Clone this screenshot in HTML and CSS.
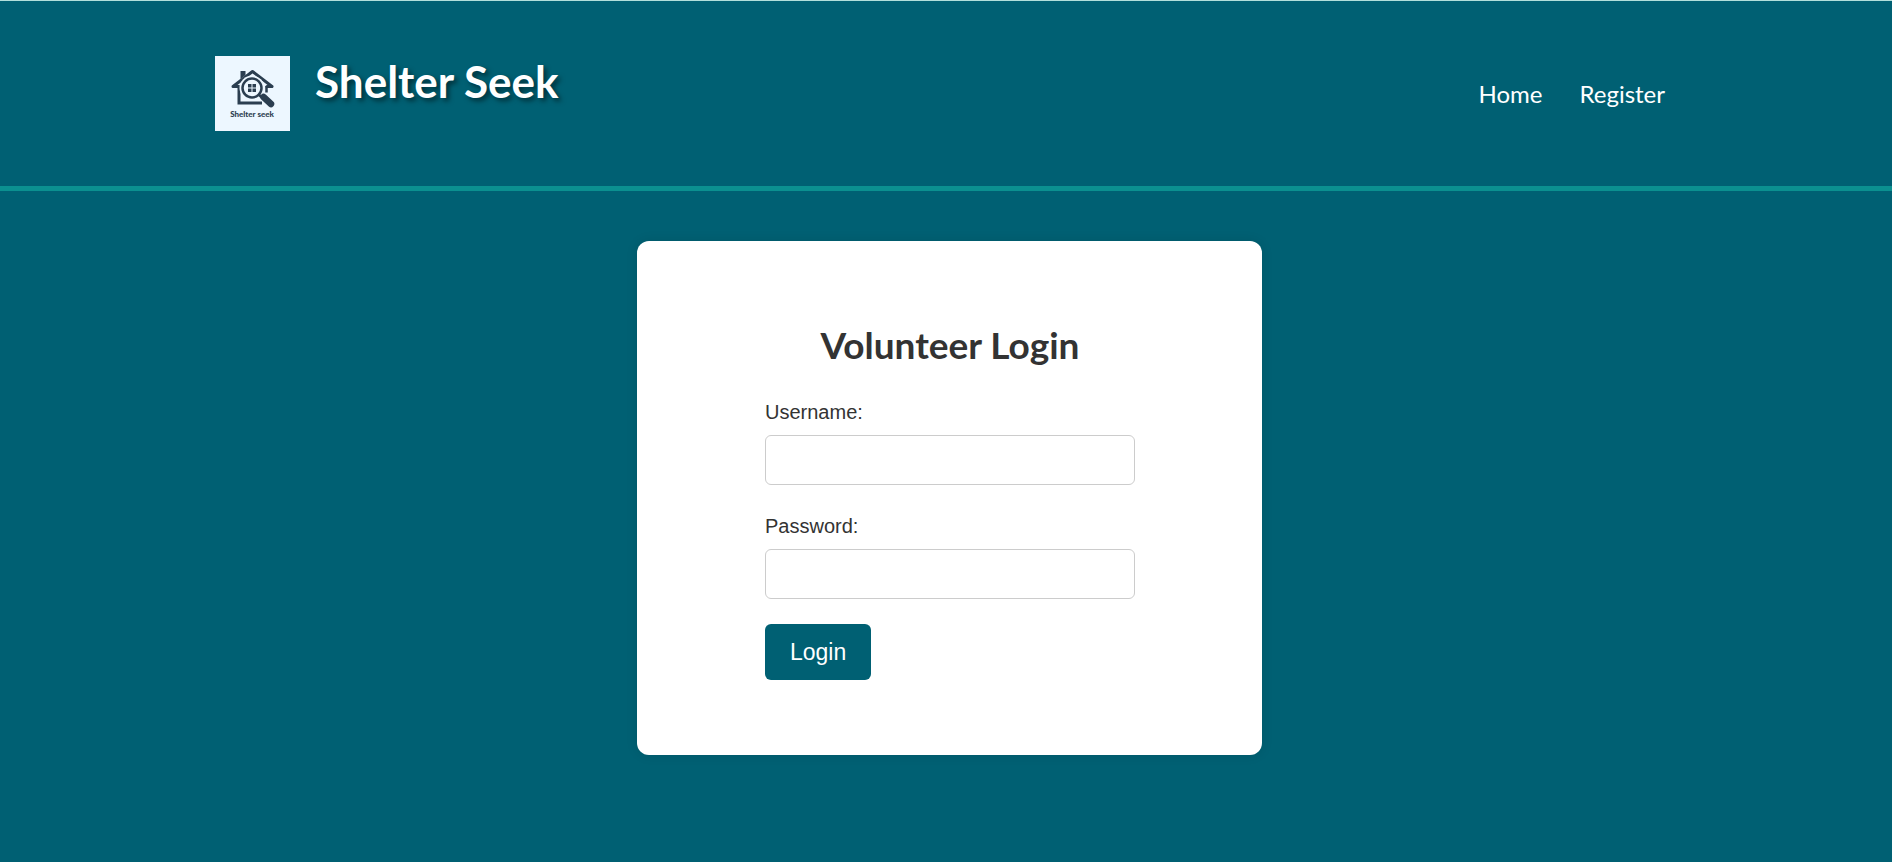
FILE: index.html
```html
<!DOCTYPE html>
<html lang="en">
<head>
  <meta charset="utf-8">
  <meta name="viewport" content="width=device-width, initial-scale=1">
  <title>Shelter Seek - Volunteer Login</title>
  <link rel="stylesheet" href="styles.css">
</head>
<body>
  <header class="site-header">
    <div class="brand">
      <svg class="logo" viewBox="0 0 75 75" role="img" aria-label="Shelter seek logo">
        <rect width="75" height="75" fill="#edf7ff"/>
        <path d="M25.500 15h5v4l-5 4z" fill="#2b3e50"/>
        <g fill="none" stroke="#2b3e50">
          <path d="M24 30.500H18L37.500 15.500 57 30.500H52" stroke-width="3" stroke-linejoin="round" stroke-linecap="round"/>
          <path d="M24 30v17H47" stroke-width="3"/>
          <path d="M51.500 30v6.500" stroke-width="2.500"/>
          <circle cx="37" cy="32" r="12.500" fill="#edf7ff" stroke="none"/>
          <circle cx="37" cy="32" r="9.500" stroke-width="2.500"/>
          <path d="M43.500 38.500l4 3.500" stroke-width="2.500"/>
          <path d="M48.500 41l7.500 7" stroke-width="6.500" stroke-linecap="round"/>
        </g>
        <path d="M33 28h3.500v3.500H33zM37.500 28H41v3.500h-3.500zM33 32.500h3.500V36H33zM37.500 32.500H41V36h-3.500z" fill="#2b3e50"/>
        <text class="logo-text" x="37" y="61" text-anchor="middle">Shelter seek</text>
      </svg>
      <h1 class="site-title">Shelter Seek</h1>
    </div>
    <nav class="site-nav">
      <a href="#">Home</a>
      <a href="#">Register</a>
    </nav>
  </header>
  <main class="content">
    <section class="card">
      <h2 class="card-title">Volunteer Login</h2>
      <form class="login-form">
        <div class="field">
          <label for="username">Username:</label>
          <input type="text" id="username" name="username">
        </div>
        <div class="field">
          <label for="password">Password:</label>
          <input type="password" id="password" name="password">
        </div>
        <button type="submit" class="submit">Login</button>
      </form>
    </section>
  </main>
</body>
</html>
```
FILE: styles.css
```css
* {
  box-sizing: border-box;
}

body {
  margin: 0;
  background: #006073;
  color: #333;
  font-family: "Liberation Sans", Arial, sans-serif;
  font-size: 20px;
  line-height: 24px;
  border-top: 1px solid #b2dfdb;
}

.site-header {
  display: flex;
  justify-content: space-between;
  align-items: center;
  padding: 55px 215px;
  border-bottom: 5px solid #0b9090;
}

.brand {
  display: flex;
  align-items: flex-start;
  gap: 25px;
}

.logo {
  width: 75px;
  height: 75px;
}

.logo-text {
  font: 900 8px Lato, sans-serif;
  fill: #2b3e50;
}

.site-title {
  margin: 0;
  font-family: "Comic Sans MS", Lato, sans-serif;
  font-size: 44px;
  font-weight: 700;
  line-height: 50px;
  color: #fff;
  text-shadow: 3px 3px 5px rgba(0, 0, 0, 0.5);
}

.site-nav {
  display: flex;
  gap: 37px;
  padding-right: 12px;
}

.site-nav a {
  font-family: "Comic Sans MS", Lato, sans-serif;
  font-size: 24px;
  line-height: 32px;
  color: #fff;
  text-decoration: none;
}

.content {
  display: flex;
  justify-content: center;
  padding: 50px 0 50px 7px;
}

.card {
  width: 625px;
  max-width: 100%;
  padding: 76px 127px 75px 128px;
  background: #fff;
  border-radius: 12px;
  box-shadow: 0 0 12px rgba(0, 0, 0, 0.1);
}

.card-title {
  margin: 0 0 27px;
  font-family: "Comic Sans MS", Lato, sans-serif;
  font-size: 37px;
  font-weight: 700;
  line-height: 56px;
  text-align: center;
}

.field {
  display: flex;
  flex-direction: column;
  gap: 11px;
  margin-bottom: 25px;
}

.field + .field {
  margin-top: 29px;
}

.field input {
  width: 100%;
  height: 50px;
  padding: 12px;
  border: 1px solid #ccc;
  border-radius: 6px;
  background: #fff;
  font: inherit;
}

.submit {
  padding: 14px 25px;
  border: 0;
  border-radius: 6px;
  background: #006073;
  color: #fff;
  font: inherit;
  font-size: 23px;
  line-height: 28px;
  cursor: pointer;
}
```
